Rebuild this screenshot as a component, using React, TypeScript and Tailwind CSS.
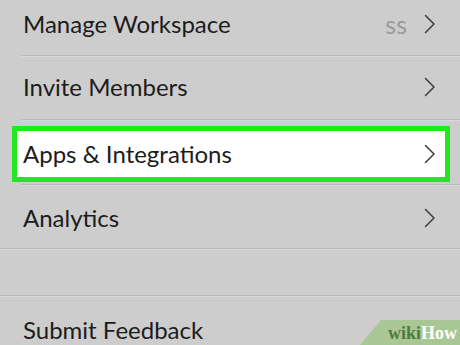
import React from 'react';

function Chevron() {
  return (
    <svg width="12" height="20" viewBox="0 0 12 20" fill="none" className="shrink-0">
      <path d="M1.5 1.5 L10 10 L1.5 18.5" stroke="#3d3d3d" strokeWidth="1.5" strokeLinecap="round" strokeLinejoin="round" />
    </svg>
  );
}

function Divider({ inset = true }: { inset?: boolean }) {
  return (
    <div className={inset ? 'pl-[21px]' : ''}>
      <div className="h-px bg-[#b9b9b9]" />
      <div className="h-px bg-[#d9d9d9]" />
    </div>
  );
}

function RowLabel({ children }: { children: React.ReactNode }) {
  return <span className="text-[24px] leading-none text-[#1c1c1c]">{children}</span>;
}

export default function App() {
  return (
    <div
      className="w-[460px] h-[345px] overflow-hidden bg-[#cdcdcd] relative"
      style={{ fontFamily: 'Lato, "Open Sans", sans-serif' }}
    >
      {/* Manage Workspace */}
      <div className="h-[55px] flex items-center pl-[23px] pr-[24px] pb-[7px]">
        <RowLabel>Manage Workspace</RowLabel>
        <span className="ml-auto mr-[17px] text-[25px] leading-none text-[#9a9a9a]">ss</span>
        <Chevron />
      </div>
      <Divider />

      {/* Invite Members */}
      <div className="h-[62px] flex items-center pl-[23px] pr-[24px] pb-[2px]">
        <RowLabel>Invite Members</RowLabel>
        <span className="ml-auto" />
        <Chevron />
      </div>
      <Divider />

      {/* Apps & Integrations (highlighted) */}
      <div className="h-[63px] pt-[5px] pb-[2px] pl-[12px] pr-[10px]">
        <div className="h-full border-[5px] border-[#22e81e] bg-white flex items-center pl-[6px] pr-[9px]">
          <RowLabel>Apps &amp; Integrations</RowLabel>
          <span className="ml-auto" />
          <Chevron />
        </div>
      </div>
      <Divider />

      {/* Analytics */}
      <div className="h-[62px] flex items-center pl-[23px] pr-[24px] pt-[1px]">
        <RowLabel>Analytics</RowLabel>
        <span className="ml-auto" />
        <Chevron />
      </div>
      <Divider inset={false} />

      <div className="h-[45px]" />
      <Divider inset={false} />

      {/* Submit Feedback */}
      <div className="h-[64px] flex items-center pl-[23px] pr-[24px] pt-[2px]">
        <RowLabel>Submit Feedback</RowLabel>
        <span className="ml-auto" />
        <Chevron />
      </div>

      {/* wikiHow watermark */}
      <div className="absolute right-0 bottom-0 w-[100px] h-[25px] bg-[#a9c794] [clip-path:polygon(21px_0,100%_0,100%_100%,0_100%)] flex items-center justify-end pr-[3px]">
        <span className="text-[18px] font-bold leading-none" style={{ fontFamily: '"Liberation Serif", serif' }}>
          <span className="text-[#4f7a3a]">wiki</span>
          <span className="text-white">How</span>
        </span>
      </div>
    </div>
  );
}
